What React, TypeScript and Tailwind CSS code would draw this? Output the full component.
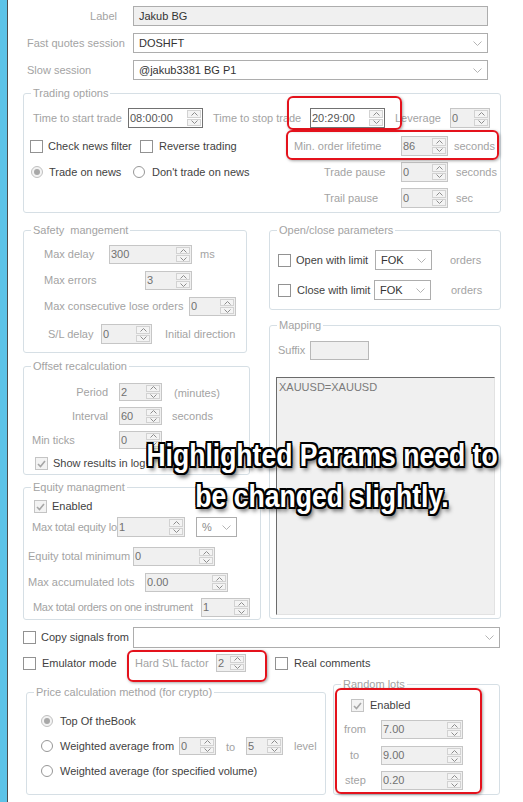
import React from "react";

const G = "text-[#a3a3a3] whitespace-nowrap";
const D = "text-[#3f3f3f] whitespace-nowrap";

const Up = () => (
  <svg width="7" height="4" viewBox="0 0 7 4">
    <path d="M0.5 3.5 L3.5 0.5 L6.5 3.5" stroke="#8c8c8c" fill="none" />
  </svg>
);
const Down = () => (
  <svg width="7" height="4" viewBox="0 0 7 4">
    <path d="M0.5 0.5 L3.5 3.5 L6.5 0.5" stroke="#8c8c8c" fill="none" />
  </svg>
);

const Spin: React.FC<{ v: string; cls: string; focus?: boolean }> = ({ v, cls, focus }) => (
  <div
    className={`flex shrink-0 border ${
      focus ? "border-[#717171] bg-white text-[#555]" : "border-[#c6c6c6] bg-[#f0f0f0] text-[#707070]"
    } ${cls}`}
  >
    <div className="flex flex-1 items-center overflow-hidden pl-px leading-none">{v}</div>
    <div className="flex w-[16px] flex-col gap-px p-px">
      <div className="flex flex-1 items-center justify-center border border-[#d2d2d2] bg-[#f4f4f4]">
        <Up />
      </div>
      <div className="flex flex-1 items-center justify-center border border-[#d2d2d2] bg-[#f4f4f4]">
        <Down />
      </div>
    </div>
  </div>
);

const Combo: React.FC<{ v?: string; cls: string; dim?: boolean }> = ({ v, cls, dim }) => (
  <div className={`flex shrink-0 items-center border border-[#adadad] bg-white pl-[5px] pr-[5px] ${cls}`}>
    <span className={`flex-1 ${dim ? "text-[#8a8a8a]" : "text-[#333]"}`}>{v}</span>
    <svg width="9" height="5" viewBox="0 0 9 5">
      <path d="M0.5 0.5 L4.5 4.5 L8.5 0.5" stroke="#b4b4b4" fill="none" />
    </svg>
  </div>
);

const Box: React.FC<{ on?: boolean; dim?: boolean }> = ({ on, dim }) => (
  <span
    className={`flex h-[13px] w-[13px] shrink-0 items-center justify-center border ${
      dim ? "border-[#c4c4c4] bg-[#f3f3f3]" : "border-[#929292] bg-white"
    }`}
  >
    {on && (
      <svg width="9" height="8" viewBox="0 0 9 8">
        <path d="M1 4 L3.5 6.5 L8 1" stroke="#a6a6a6" strokeWidth="1.6" fill="none" />
      </svg>
    )}
  </span>
);

const Radio: React.FC<{ on?: boolean }> = ({ on }) => (
  <span
    className={`flex h-[12px] w-[12px] shrink-0 items-center justify-center rounded-full border ${
      on ? "border-[#c0c0c0] bg-[#f3f3f3]" : "border-[#979797] bg-white"
    }`}
  >
    {on && <span className="h-[6px] w-[6px] rounded-full bg-[#a8a8a8]" />}
  </span>
);

const Group: React.FC<{ title: string; cls: string; children?: React.ReactNode }> = ({ title, cls, children }) => (
  <div className={`relative flex shrink-0 flex-col rounded-[3px] border border-[#d6dfe5] ${cls}`}>
    <span className={`absolute -top-[8px] left-[7px] bg-white px-[2px] leading-[14px] ${G}`}>{title}</span>
    {children}
  </div>
);

const Mark: React.FC<{ cls: string }> = ({ cls }) => (
  <div className={`absolute rounded-[6px] border-2 border-[#e4121c] shadow-[1px_1px_3px_rgba(0,0,0,0.35)] ${cls}`} />
);

export default function App() {
  return (
    <div className="relative flex h-[802px] w-[523px] overflow-hidden bg-white font-['Liberation_Sans',Arial,sans-serif] text-[11px]">
      <div className="w-[7px] shrink-0 bg-[#5cc3e8]" />
      <div className="w-px shrink-0 bg-[#4d4d4d]" />
      <div className="flex flex-1 flex-col">
        {/* top fields */}
        <div className="mt-[6px] flex h-[20px] items-center">
          <span className={`w-[109px] text-right ${G}`}>Label</span>
          <div className="ml-[16px] flex h-[20px] w-[355px] items-center border border-[#adadad] bg-[#f0f0f0] pl-[5px] text-[#333]">
            Jakub BG
          </div>
        </div>
        <div className="mt-[7px] flex h-[20px] items-center">
          <span className={`ml-[19px] w-[106px] ${G}`}>Fast quotes session</span>
          <Combo v="DOSHFT" cls="h-[20px] w-[355px]" />
        </div>
        <div className="mt-[7px] flex h-[20px] items-center">
          <span className={`ml-[19px] w-[106px] ${G}`}>Slow session</span>
          <Combo v="@jakub3381 BG P1" cls="h-[20px] w-[355px]" />
        </div>

        {/* trading options */}
        <Group title="Trading options" cls="ml-[15px] mt-[13px] h-[120px] w-[478px]">
          <div className="mt-[14px] flex h-[20px] items-center">
            <span className={`ml-[9px] w-[95px] ${G}`}>Time to start trade</span>
            <Spin v="08:00:00" cls="h-[20px] w-[75px]" focus />
            <span className={`ml-[10px] w-[97px] ${G}`}>Time to stop trade</span>
            <Spin v="20:29:00" cls="h-[20px] w-[75px]" focus />
            <span className={`ml-[10px] w-[55px] ${G}`}>Leverage</span>
            <Spin v="0" cls="h-[20px] w-[40px]" />
          </div>
          <div className="mt-[8px] flex h-[20px] items-center">
            <div className="ml-[6px] flex w-[110px] items-center">
              <Box />
              <span className={`ml-[5px] ${D}`}>Check news filter</span>
            </div>
            <div className="flex w-[154px] items-center">
              <Box />
              <span className={`ml-[6px] ${D}`}>Reverse trading</span>
            </div>
            <span className={`w-[107px] ${G}`}>Min. order lifetime</span>
            <Spin v="86" cls="h-[20px] w-[47px]" />
            <span className={`ml-[6px] ${G}`}>seconds</span>
          </div>
          <div className="mt-[6px] flex h-[20px] items-center">
            <div className="ml-[7px] flex w-[102px] items-center">
              <Radio on />
              <span className={`ml-[6px] ${D}`}>Trade on news</span>
            </div>
            <div className="flex w-[191px] items-center">
              <Radio />
              <span className={`ml-[7px] ${D}`}>Don't trade on news</span>
            </div>
            <span className={`w-[77px] ${G}`}>Trade pause</span>
            <Spin v="0" cls="h-[20px] w-[47px]" />
            <span className={`ml-[8px] ${G}`}>seconds</span>
          </div>
          <div className="mt-[6px] flex h-[20px] items-center">
            <span className={`ml-[300px] w-[77px] ${G}`}>Trail pause</span>
            <Spin v="0" cls="h-[20px] w-[47px]" />
            <span className={`ml-[8px] ${G}`}>sec</span>
          </div>
        </Group>

        {/* middle columns */}
        <div className="ml-[15px] mt-[17px] flex">
          <div className="flex w-[238px] flex-col">
            <Group title="Safety  mangement" cls="h-[123px] w-[224px] [&>span]:whitespace-pre">
              <div className="mt-[14px] flex h-[19px] items-center">
                <span className={`ml-[20px] w-[65px] ${G}`}>Max delay</span>
                <Spin v="300" cls="h-[19px] w-[83px]" />
                <span className={`ml-[8px] ${G}`}>ms</span>
              </div>
              <div className="mt-[7px] flex h-[19px] items-center">
                <span className={`ml-[20px] w-[101px] ${G}`}>Max errors</span>
                <Spin v="3" cls="h-[19px] w-[47px]" />
              </div>
              <div className="mt-[7px] flex h-[19px] items-center">
                <span className={`ml-[20px] w-[145px] ${G}`}>Max consecutive lose orders</span>
                <Spin v="0" cls="h-[19px] w-[47px]" />
              </div>
              <div className="mt-[8px] flex h-[20px] items-center">
                <span className={`ml-[24px] w-[53px] ${G}`}>S/L delay</span>
                <Spin v="0" cls="h-[20px] w-[51px]" />
                <span className={`ml-[13px] ${G}`}>Initial direction</span>
              </div>
            </Group>

            <Group title="Offset recalculation" cls="mt-[13px] h-[109px] w-[227px]">
              <div className="mt-[16px] flex h-[18px] items-center">
                <span className={`w-[84px] text-right ${G}`}>Period</span>
                <Spin v="2" cls="ml-[11px] h-[18px] w-[43px]" />
                <span className={`ml-[12px] mt-[3px] ${G}`}>(minutes)</span>
              </div>
              <div className="mt-[6px] flex h-[18px] items-center">
                <span className={`w-[84px] text-right ${G}`}>Interval</span>
                <Spin v="60" cls="ml-[11px] h-[18px] w-[43px]" />
                <span className={`ml-[10px] ${G}`}>seconds</span>
              </div>
              <div className="mt-[6px] flex h-[18px] items-center">
                <span className={`ml-[8px] w-[87px] ${G}`}>Min ticks</span>
                <Spin v="0" cls="h-[18px] w-[43px]" />
              </div>
              <div className="mt-[8px] flex h-[13px] items-center">
                <span className="ml-[11px]">
                  <Box on dim />
                </span>
                <span className={`ml-[5px] ${D}`}>Show results in log</span>
              </div>
            </Group>

            <Group title="Equity managment" cls="mt-[12px] h-[133px] w-[238px]">
              <div className="mt-[12px] flex h-[13px] items-center">
                <span className="ml-[10px]">
                  <Box on dim />
                </span>
                <span className={`ml-[5px] ${D}`}>Enabled</span>
              </div>
              <div className="mt-[4px] flex h-[20px] items-center">
                <span className={`ml-[8px] w-[85px] tracking-[-0.2px] ${G}`}>Max total equity lo</span>
                <Spin v="1" cls="h-[20px] w-[68px]" />
                <Combo v="%" dim cls="ml-[11px] h-[20px] w-[41px]" />
              </div>
              <div className="mt-[10px] flex h-[19px] items-center">
                <span className={`ml-[4px] w-[105px] ${G}`}>Equity total minimum</span>
                <Spin v="0" cls="h-[19px] w-[82px]" />
              </div>
              <div className="mt-[7px] flex h-[19px] items-center">
                <span className={`ml-[4px] w-[117px] ${G}`}>Max accumulated lots</span>
                <Spin v="0.00" cls="h-[19px] w-[83px]" />
              </div>
              <div className="mt-[6px] flex h-[19px] items-center">
                <span className={`ml-[9px] w-[168px] tracking-[-0.3px] ${G}`}>Max total orders on one instrument</span>
                <Spin v="1" cls="h-[19px] w-[49px]" />
              </div>
            </Group>
          </div>

          <div className="ml-[8px] flex w-[232px] flex-col">
            <Group title="Open/close parameters" cls="h-[80px] w-[232px]">
              <div className="mt-[19px] flex h-[20px] items-center">
                <div className="ml-[8px] flex w-[97px] items-center">
                  <Box />
                  <span className={`ml-[5px] ${D}`}>Open with limit</span>
                </div>
                <Combo v="FOK" cls="h-[20px] w-[57px]" />
                <span className={`ml-[18px] ${G}`}>orders</span>
              </div>
              <div className="mt-[10px] flex h-[20px] items-center">
                <div className="ml-[8px] flex w-[96px] items-center">
                  <Box />
                  <span className={`ml-[6px] ${D}`}>Close with limit</span>
                </div>
                <Combo v="FOK" cls="h-[20px] w-[57px]" />
                <span className={`ml-[20px] ${G}`}>orders</span>
              </div>
            </Group>

            <Group title="Mapping" cls="mt-[15px] h-[294px] w-[232px]">
              <div className="mt-[15px] flex h-[19px] items-center">
                <span className={`ml-[8px] w-[32px] ${G}`}>Suffix</span>
                <div className="h-[19px] w-[59px] border border-[#b8b8b8] bg-[#f0f0f0]" />
              </div>
              <div className="ml-[6px] mt-[17px] h-[238px] w-[219px] border border-b-[#e2e2e2] border-l-[#6b6b6b] border-r-[#e2e2e2] border-t-[#6b6b6b] bg-[#f0f0f0] pl-[2px] pt-[1px] text-[#7a7a7a]">
                XAUUSD=XAUUSD
              </div>
            </Group>
          </div>
        </div>

        {/* bottom */}
        <div className="mt-[7px] flex h-[21px] items-center">
          <div className="ml-[15px] flex w-[110px] items-center">
            <Box />
            <span className={`ml-[5px] ${D}`}>Copy signals from</span>
          </div>
          <Combo cls="h-[21px] w-[367px]" />
        </div>
        <div className="mt-[6px] flex h-[18px] items-center">
          <div className="ml-[15px] flex w-[112px] items-center">
            <Box />
            <span className={`ml-[6px] ${D}`}>Emulator mode</span>
          </div>
          <span className={`w-[81px] ${G}`}>Hard S\L factor</span>
          <Spin v="2" cls="h-[18px] w-[30px]" />
          <span className="ml-[29px]">
            <Box />
          </span>
          <span className={`ml-[6px] ${D}`}>Real comments</span>
        </div>
        <div className="mt-[12px] flex items-end">
          <Group title="Price calculation method (for crypto)" cls="ml-[18px] h-[103px] w-[300px]">
            <div className="mt-[20px] flex h-[16px] items-center">
              <span className="ml-[14px]">
                <Radio on />
              </span>
              <span className={`ml-[7px] ${D}`}>Top Of theBook</span>
            </div>
            <div className="mt-[8px] flex h-[18px] items-center">
              <div className="ml-[14px] flex w-[138px] items-center">
                <Radio />
                <span className={`ml-[7px] ${D}`}>Weighted average from</span>
              </div>
              <Spin v="0" cls="h-[18px] w-[37px]" />
              <span className={`ml-[10px] mt-[2px] w-[20px] ${G}`}>to</span>
              <Spin v="5" cls="h-[18px] w-[37px]" />
              <span className={`ml-[11px] ${G}`}>level</span>
            </div>
            <div className="mt-[8px] flex h-[16px] items-center">
              <span className="ml-[14px]">
                <Radio />
              </span>
              <span className={`ml-[7px] ${D}`}>Weighted average (for specified volume)</span>
            </div>
          </Group>
          <Group title="Random lots" cls="ml-[7px] h-[111px] w-[167px]">
            <div className="mt-[14px] flex h-[13px] items-center">
              <span className="ml-[17px]">
                <Box on dim />
              </span>
              <span className={`ml-[6px] ${D}`}>Enabled</span>
            </div>
            <div className="mt-[8px] flex h-[19px] items-center">
              <span className={`ml-[10px] w-[37px] ${G}`}>from</span>
              <Spin v="7.00" cls="h-[19px] w-[82px]" />
            </div>
            <div className="mt-[7px] flex h-[19px] items-center">
              <span className={`ml-[16px] w-[31px] ${G}`}>to</span>
              <Spin v="9.00" cls="h-[19px] w-[82px]" />
            </div>
            <div className="mt-[6px] flex h-[19px] items-center">
              <span className={`ml-[11px] w-[36px] ${G}`}>step</span>
              <Spin v="0.20" cls="h-[19px] w-[82px]" />
            </div>
          </Group>
        </div>
      </div>

      {/* highlight marks */}
      <Mark cls="left-[287px] top-[96px] h-[34px] w-[115px]" />
      <Mark cls="left-[286px] top-[130px] h-[30px] w-[213px]" />
      <Mark cls="left-[127px] top-[650px] h-[32px] w-[140px]" />
      <Mark cls="left-[335px] top-[688px] h-[106px] w-[147px]" />

      {/* caption */}
      <div className="absolute left-0 top-[435px] w-[644px] scale-x-[0.83] whitespace-nowrap text-center font-['Liberation_Sans',Arial,sans-serif] text-[32px] font-bold leading-[41px] text-white [text-shadow:-2px_-2px_0_#000,2px_-2px_0_#000,-2px_2px_0_#000,2px_2px_0_#000,0_-2px_0_#000,0_2px_0_#000,-2px_0_0_#000,2px_0_0_#000,3px_4px_5px_rgba(0,0,0,0.7)]">
        Highlighted Params need to
        <br />
        be changed slightly.
      </div>
    </div>
  );
}
